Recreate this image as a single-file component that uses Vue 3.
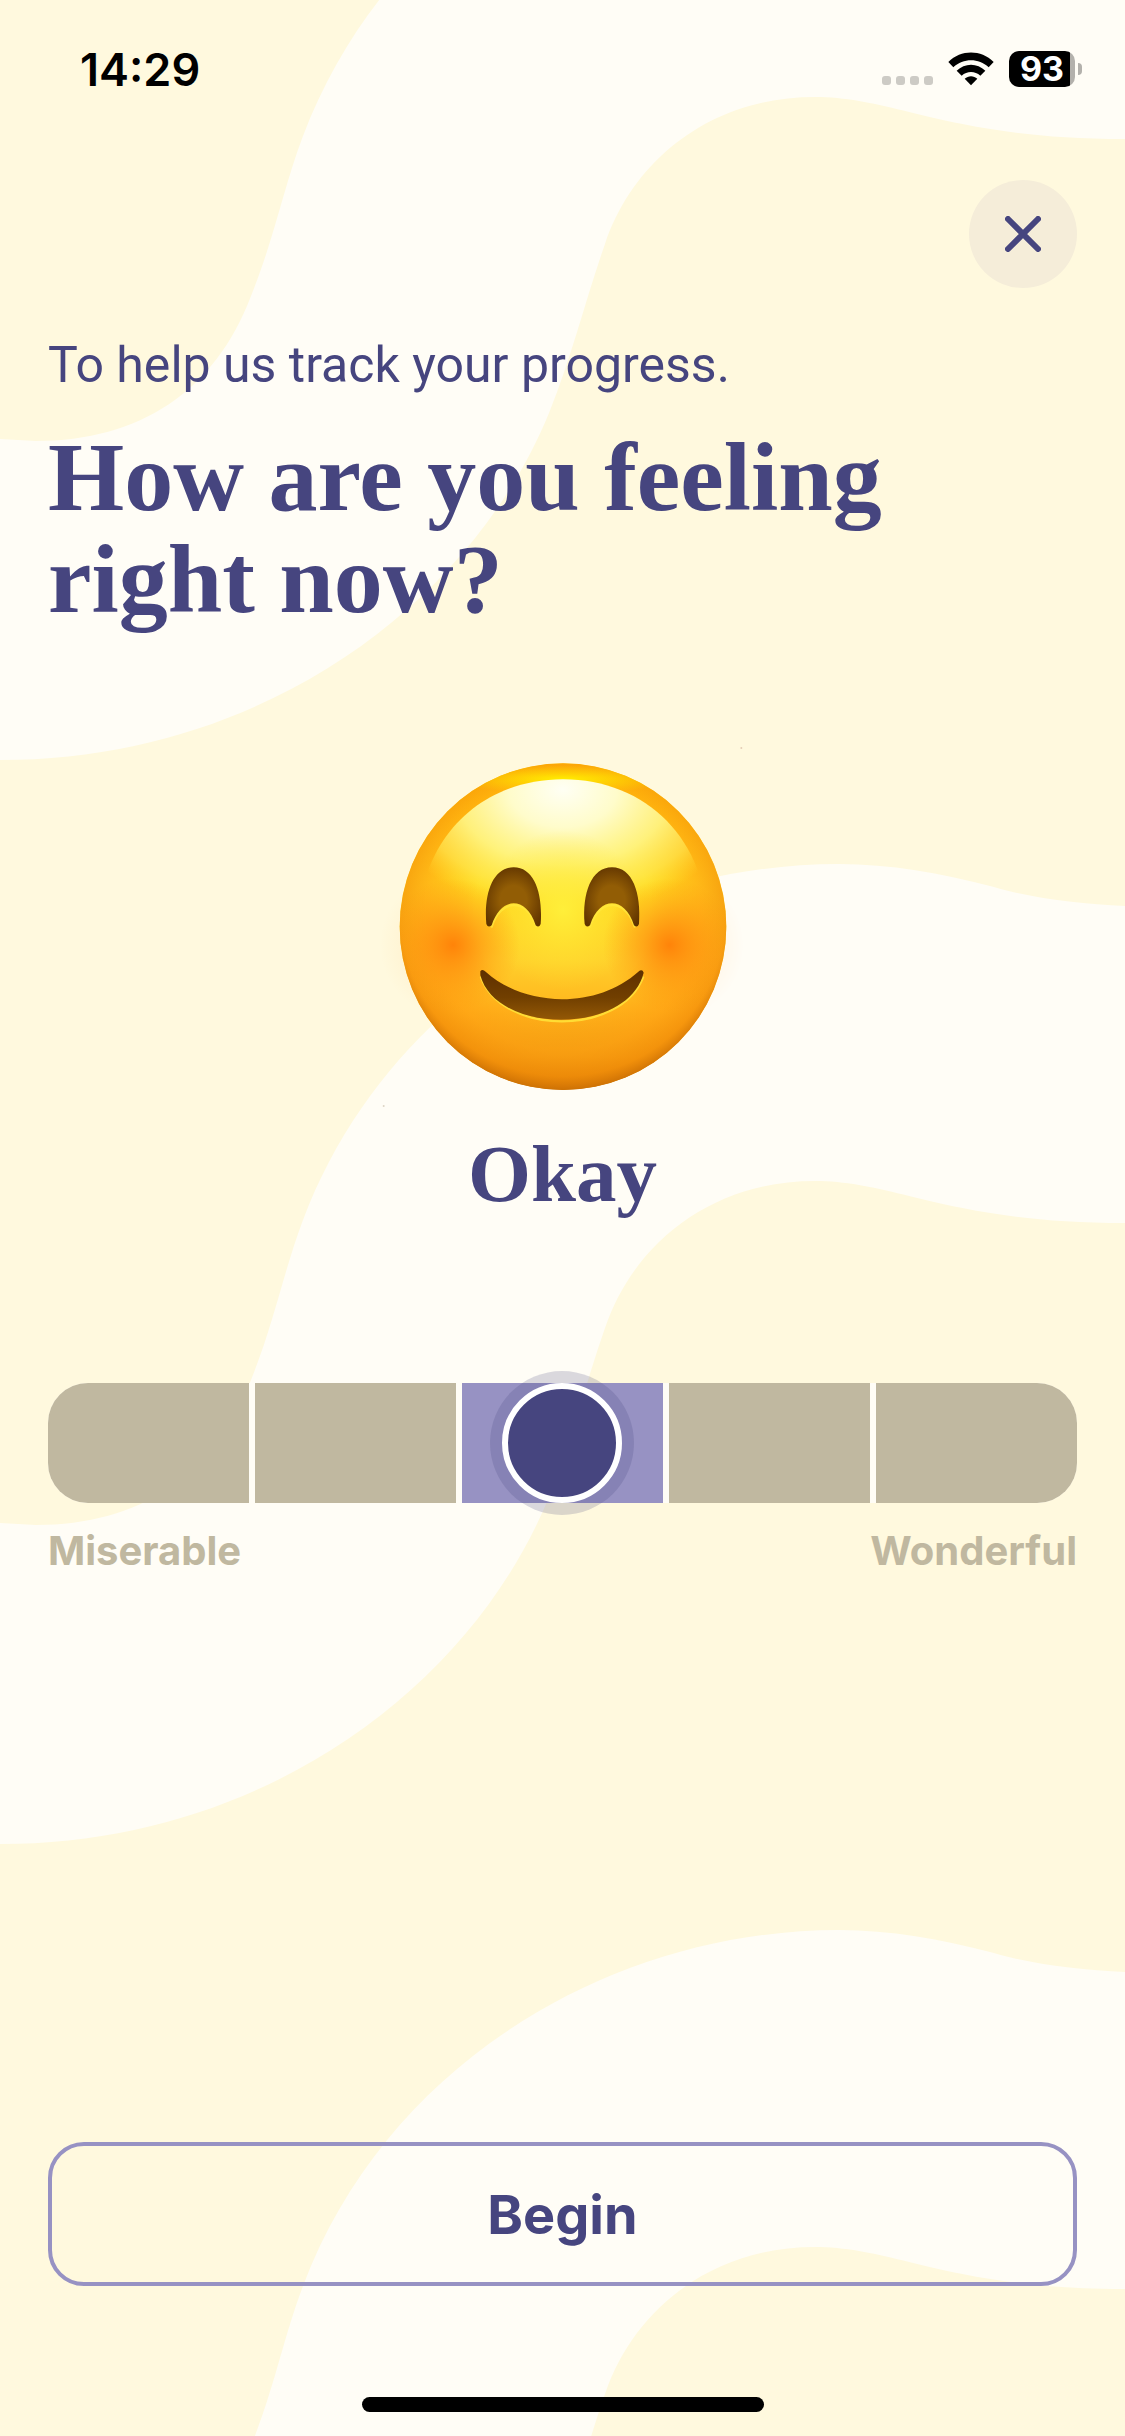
<template>
  <main class="checkin-page">
    <svg class="waves" viewBox="0 0 1125 2436" preserveAspectRatio="xMidYMin slice" aria-hidden="true">
      <path v-for="y in waveOffsets" :key="y" :d="wavePath" :transform="`translate(0 ${y})`" />
    </svg>

    <header class="status-bar">
      <time class="status-time">14:29</time>
      <div class="status-icons">
        <div class="signal"><i v-for="n in 4" :key="n"></i></div>
        <svg class="wifi" viewBox="0 0 138 100" aria-hidden="true">
          <path d="M1 29C39-9 99-9 137 29L122 45C92 17 46 17 16 45Z" />
          <path d="M26 55C50 31 88 31 112 55L97 70C81 55 57 55 41 70Z" />
          <path d="M50 79C61 69 77 69 88 79L69 99Z" />
        </svg>
        <div class="battery"><span>93</span></div>
      </div>
    </header>

    <div class="content">
      <button class="close-button" type="button" aria-label="Close">
        <svg viewBox="0 0 36 36" aria-hidden="true">
          <path d="M3 3L33 33M33 3L3 33" />
        </svg>
      </button>

      <p class="intro">To help us track your progress.</p>
      <h1>How are you feeling right now?</h1>

      <svg class="face" viewBox="-5 0 1170 1170" aria-hidden="true">
        <defs>
          <linearGradient id="skin" x1="0" y1="0" x2="0" y2="1">
            <stop offset="0" stop-color="#ffc400" />
            <stop offset="0.35" stop-color="#ffdc20" />
            <stop offset="0.6" stop-color="#ffd02c" />
            <stop offset="0.76" stop-color="#ffb41c" />
            <stop offset="0.9" stop-color="#ee9e12" />
            <stop offset="1" stop-color="#cf7806" />
          </linearGradient>
          <radialGradient id="rim" cx="0.5" cy="0.46" r="0.54">
            <stop offset="0.5" stop-color="#ffa010" stop-opacity="0" />
            <stop offset="0.78" stop-color="#ff9c10" stop-opacity="0.55" />
            <stop offset="0.92" stop-color="#f48c08" stop-opacity="0.7" />
            <stop offset="1" stop-color="#cc7004" stop-opacity="0.95" />
          </radialGradient>
          <radialGradient id="crown" cx="0.5" cy="0.5" r="0.5">
            <stop offset="0" stop-color="#ffee00" />
            <stop offset="1" stop-color="#ffe000" stop-opacity="0" />
          </radialGradient>
          <radialGradient id="shine" gradientUnits="userSpaceOnUse" cx="580" cy="190" r="540"
            gradientTransform="translate(0 45) scale(1 0.7)">
            <stop offset="0" stop-color="#fffff4" />
            <stop offset="0.3" stop-color="#fffccb" />
            <stop offset="0.6" stop-color="#fff686" stop-opacity="0.9" />
            <stop offset="0.82" stop-color="#ffec58" stop-opacity="0.6" />
            <stop offset="1" stop-color="#ffe430" stop-opacity="0" />
          </radialGradient>
          <radialGradient id="glow" cx="0.5" cy="0.5" r="0.5">
            <stop offset="0" stop-color="#fff13c" stop-opacity="0.9" />
            <stop offset="1" stop-color="#ffe52c" stop-opacity="0" />
          </radialGradient>
          <radialGradient id="blush" cx="0.5" cy="0.5" r="0.5">
            <stop offset="0" stop-color="#ff8008" stop-opacity="0.95" />
            <stop offset="0.45" stop-color="#ff8c0c" stop-opacity="0.55" />
            <stop offset="1" stop-color="#ff980c" stop-opacity="0" />
          </radialGradient>
          <radialGradient id="eye" cx="0.5" cy="0.55" r="0.6">
            <stop offset="0.4" stop-color="#925d05" />
            <stop offset="1" stop-color="#603400" />
          </radialGradient>
          <linearGradient id="mouth" x1="0" y1="0" x2="0" y2="1">
            <stop offset="0" stop-color="#5f3000" />
            <stop offset="0.55" stop-color="#713f00" />
            <stop offset="1" stop-color="#935806" />
          </linearGradient>
          <clipPath id="head">
            <circle cx="580" cy="590" r="490" />
          </clipPath>
        </defs>
        <circle cx="1115" cy="54" r="3" fill="#e5cdb5" />
        <circle cx="42" cy="1128" r="3" fill="#ded5c5" />
        <g opacity="0.15">
          <circle cx="250" cy="645" r="220" fill="url(#blush)" />
          <circle cx="900" cy="645" r="220" fill="url(#blush)" />
        </g>
        <circle cx="580" cy="590" r="490" fill="url(#skin)" />
        <g clip-path="url(#head)">
          <circle cx="580" cy="590" r="491" fill="url(#rim)" />
          <ellipse cx="580" cy="148" rx="330" ry="42" fill="url(#crown)" />
          <path d="M145 600C145 330 330 148 580 148S1015 330 1015 600C900 700 260 700 145 600Z" fill="url(#shine)" />
          <ellipse cx="580" cy="540" rx="230" ry="240" fill="url(#glow)" />
          <circle cx="250" cy="645" r="200" fill="url(#blush)" />
          <circle cx="900" cy="645" r="200" fill="url(#blush)" />
        </g>
        <g fill="none" stroke="#ffe83c" stroke-width="7" stroke-linecap="round" opacity="0.8">
          <path d="M366 590C392 504 474 504 500 590" />
          <path d="M661 590C687 504 769 504 795 590" />
          <path d="M334 742C400 918 752 918 820 742" />
        </g>
        <path v-for="x in [0, 295]" :key="x" :transform="`translate(${x} 0)`" fill="url(#eye)"
          d="M350 582C342 490 370 412 432 412S520 490 513 582Q508 595 498 586C470 498 394 498 366 586Q355 595 350 582Z" />
        <path fill="url(#mouth)"
          d="M332 724Q338 716 348 725C470 835 684 835 806 725Q818 715 822 728C776 915 380 915 332 736Z" />
      </svg>

      <output class="mood" for="mood-range">{{ moods[mood - 1] }}</output>

      <div class="mood-slider">
        <div class="segments">
          <span v-for="n in moods.length" :key="n" :class="{ active: n === mood }"></span>
        </div>
        <input id="mood-range" v-model.number="mood" type="range" min="1" max="5" step="1"
          aria-label="How are you feeling right now?" />
      </div>
      <div class="range-labels">
        <span>{{ moods[0] }}</span>
        <span>{{ moods[4] }}</span>
      </div>

      <button class="begin-button" type="button">Begin</button>
    </div>

    <div class="home-indicator"></div>
  </main>
</template>

<script setup>
import { ref } from 'vue'

const moods = ['Miserable', 'Sad', 'Okay', 'Good', 'Wonderful']
const mood = ref(3)

// one ribbon, repeated down the page
const waveOffsets = [-1084, 0, 1066]
const wavePath =
  'M1125 906C1080 904 1030 898 994 887C940 873 890 864 839 864' +
  'C620 864 390 990 303 1220C283 1273 275 1320 251 1380' +
  'C215 1475 140 1525 36 1525L0 1523V1844' +
  'C260 1844 470 1690 549 1497C572 1440 585 1385 605 1328' +
  'C635 1240 715 1181 815 1181C895 1181 950 1223 1125 1223Z'
</script>

<style>
body {
  margin: 0;
  background: #fff9de;
}
</style>

<style scoped>
.checkin-page {
  position: relative;
  display: flex;
  flex-direction: column;
  min-height: 100vh;
  box-sizing: border-box;
  padding-bottom: 24px;
  overflow: hidden;
  color: #46457f;
  font-family: Roboto, "Liberation Sans", sans-serif;
}

.waves {
  position: absolute;
  inset: 0;
  width: 100%;
  height: 100%;
  fill: #fffdf6;
}

.status-bar,
.content,
.home-indicator {
  position: relative;
}

.status-bar {
  display: flex;
  justify-content: space-between;
  align-items: center;
  height: 138px;
  padding: 0 43px 0 80px;
  color: #000;
  font-family: Inter, sans-serif;
  font-weight: 600;
}

.status-time {
  font-size: 45px;
}

.status-icons {
  display: flex;
  align-items: center;
}

.signal {
  display: flex;
  align-self: flex-end;
  gap: 5px;
  margin: 0 15px 2px 0;
}

.signal i {
  width: 9px;
  height: 9px;
  border-radius: 3px;
  background: #cdcbc5;
}

.wifi {
  width: 46px;
  height: 34px;
  margin-right: 15px;
}

.battery {
  position: relative;
  width: 66px;
  height: 36px;
  margin-right: 7px;
  border-radius: 10px;
  background: linear-gradient(90deg, #000 61px, #b3b1ac 61px);
  color: #fff;
  font-size: 34px;
  font-weight: 700;
  line-height: 36px;
  text-align: center;
}

.battery::after {
  content: "";
  position: absolute;
  top: 12px;
  right: -7px;
  width: 4px;
  height: 12px;
  border-radius: 0 4px 4px 0;
  background: #b3b1ac;
}

.content {
  display: flex;
  flex: 1;
  flex-direction: column;
  padding: 42px 48px 0;
}

.close-button {
  display: grid;
  place-items: center;
  align-self: flex-end;
  width: 108px;
  height: 108px;
  padding: 0;
  border: none;
  border-radius: 50%;
  background: #f5edd9;
  cursor: pointer;
}

.close-button svg {
  width: 36px;
  height: 36px;
  fill: none;
  stroke: #46457f;
  stroke-width: 6;
  stroke-linecap: round;
}

.intro {
  margin: 47px 0 31px;
  font-size: 50px;
  line-height: 60px;
}

h1 {
  max-width: 900px;
  margin: 0;
  font-family: "Liberation Serif", serif;
  font-size: 98px;
  font-weight: 700;
  line-height: 102px;
}

.face {
  align-self: center;
  width: 390px;
  height: 390px;
  margin-top: 100px;
}

.mood {
  margin: 6px 0 161px;
  font-family: "Liberation Serif", serif;
  font-size: 81px;
  font-weight: 700;
  line-height: 96px;
  text-align: center;
}

.mood-slider {
  position: relative;
}

.segments {
  display: grid;
  grid-template-columns: repeat(5, 1fr);
  gap: 6px;
  height: 120px;
  border-radius: 40px;
  overflow: hidden;
  background: #fffdf6;
}

.segments span {
  background: #c0b8a0;
}

.segments .active {
  background: #9792c3;
}

/* inset so that the thumb stops in the middle of the outer segments */
.mood-slider input {
  position: absolute;
  top: 0;
  left: calc(10% - 60px);
  width: calc(80% + 120px);
  height: 120px;
  margin: 0;
  appearance: none;
  background: transparent;
  cursor: pointer;
}

.mood-slider input::-webkit-slider-thumb {
  appearance: none;
  box-sizing: border-box;
  width: 120px;
  height: 120px;
  border: 6px solid #fff;
  border-radius: 50%;
  background: #46457f;
  box-shadow: 0 0 0 12px rgba(70, 69, 127, 0.2);
}

.range-labels {
  display: flex;
  justify-content: space-between;
  margin: 24px 0;
  color: #c0b8a0;
  font-family: Inter, sans-serif;
  font-size: 40px;
  font-weight: 700;
  line-height: 48px;
}

.begin-button {
  height: 144px;
  margin-top: auto;
  border: 4px solid #9792c3;
  border-radius: 36px;
  background: transparent;
  color: #46457f;
  font-family: Inter, sans-serif;
  font-size: 54px;
  font-weight: 700;
  cursor: pointer;
}

.home-indicator {
  align-self: center;
  width: 402px;
  height: 15px;
  margin-top: 111px;
  border-radius: 8px;
  background: #000;
}
</style>
